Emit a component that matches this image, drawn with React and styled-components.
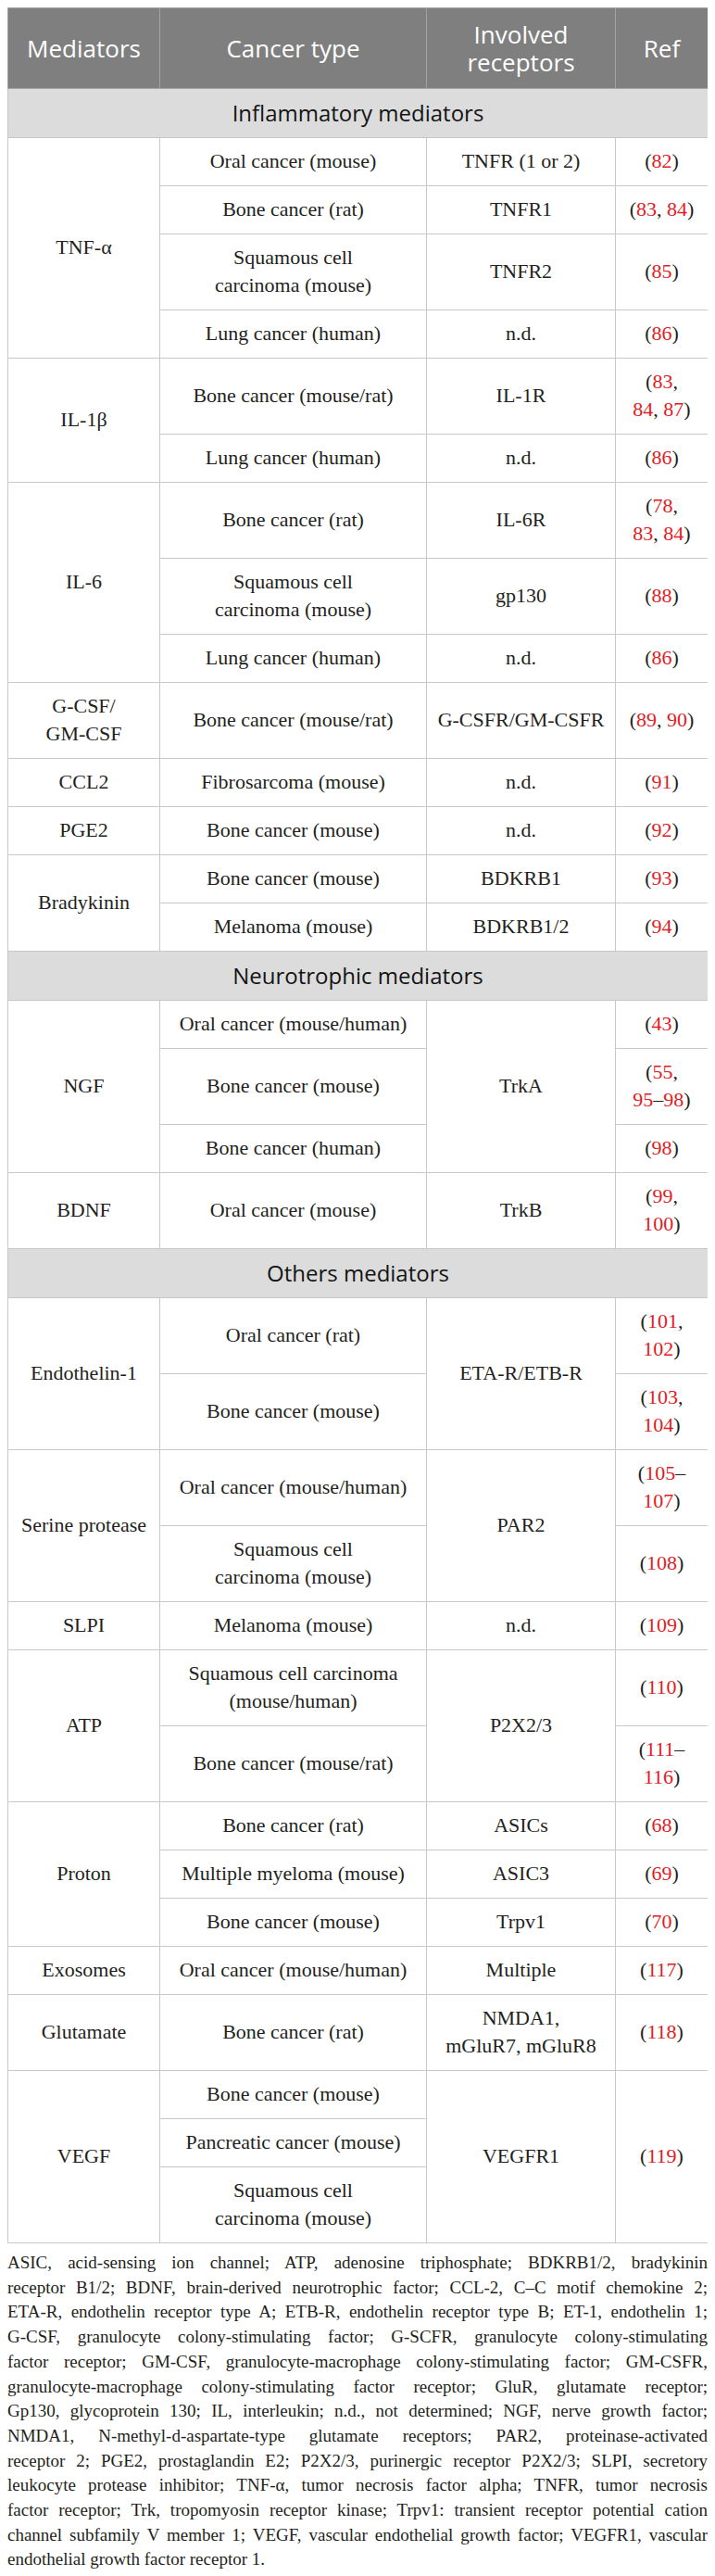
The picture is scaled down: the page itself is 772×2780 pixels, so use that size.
import React from "react";
import styled, { createGlobalStyle } from "styled-components";

const GlobalStyle = createGlobalStyle`
  body {
    margin: 8px;
    background: #ffffff;
  }
`;

const Page = styled.div`
  width: 756px;
`;

const Table = styled.table`
  width: 756px;
  table-layout: fixed;
  border-collapse: collapse;
  font-family: "Liberation Serif", "Times New Roman", serif;
  font-size: 22px;
  color: #231f20;
`;

const HeadCell = styled.th`
  background: #7f7f7f;
  color: #ffffff;
  font-family: "Open Sans", "Noto Sans", sans-serif;
  font-weight: 400;
  font-size: 26px;
  line-height: 30px;
  padding: 13px 4px;
  border: 1px solid #a3a3a3;
  text-align: center;
  vertical-align: middle;
`;

const SectionCell = styled.td`
  background: #dcdcdc;
  color: #141414;
  font-family: "Open Sans", "Noto Sans", sans-serif;
  font-size: 24px;
  line-height: 30px;
  padding: 11px 4px;
  border: 1px solid #c6c6c6;
  text-align: center;
`;

const Cell = styled.td`
  border: 1px solid #c8c8c8;
  padding: 10px 4px 11px;
  line-height: 30px;
  text-align: center;
  vertical-align: middle;
  white-space: nowrap;
`;

const RefNum = styled.span`
  color: #e31b23;
`;

const Notes = styled.div`
  margin-top: 8px;
  font-family: "Liberation Serif", "Times New Roman", serif;
  font-size: 19px;
  line-height: 26.7px;
  color: #231f20;
`;

const NoteLine = styled.div`
  text-align: justify;
  text-align-last: ${(p) => (p.$last ? "left" : "justify")};
`;

const sections = [
  {
    title: "Inflammatory mediators",
    groups: [
      {
        name: "TNF-α",
        rows: [
          { cancer: "Oral cancer (mouse)", receptor: "TNFR (1 or 2)", ref: "(82)" },
          { cancer: "Bone cancer (rat)", receptor: "TNFR1", ref: "(83, 84)" },
          { cancer: "Squamous cell\ncarcinoma (mouse)", receptor: "TNFR2", ref: "(85)" },
          { cancer: "Lung cancer (human)", receptor: "n.d.", ref: "(86)" },
        ],
      },
      {
        name: "IL-1β",
        rows: [
          { cancer: "Bone cancer (mouse/rat)", receptor: "IL-1R", ref: "(83,\n84, 87)" },
          { cancer: "Lung cancer (human)", receptor: "n.d.", ref: "(86)" },
        ],
      },
      {
        name: "IL-6",
        rows: [
          { cancer: "Bone cancer (rat)", receptor: "IL-6R", ref: "(78,\n83, 84)" },
          { cancer: "Squamous cell\ncarcinoma (mouse)", receptor: "gp130", ref: "(88)" },
          { cancer: "Lung cancer (human)", receptor: "n.d.", ref: "(86)" },
        ],
      },
      {
        name: "G-CSF/\nGM-CSF",
        rows: [
          { cancer: "Bone cancer (mouse/rat)", receptor: "G-CSFR/GM-CSFR", ref: "(89, 90)" },
        ],
      },
      {
        name: "CCL2",
        rows: [{ cancer: "Fibrosarcoma (mouse)", receptor: "n.d.", ref: "(91)" }],
      },
      {
        name: "PGE2",
        rows: [{ cancer: "Bone cancer (mouse)", receptor: "n.d.", ref: "(92)" }],
      },
      {
        name: "Bradykinin",
        rows: [
          { cancer: "Bone cancer (mouse)", receptor: "BDKRB1", ref: "(93)" },
          { cancer: "Melanoma (mouse)", receptor: "BDKRB1/2", ref: "(94)" },
        ],
      },
    ],
  },
  {
    title: "Neurotrophic mediators",
    groups: [
      {
        name: "NGF",
        rows: [
          { cancer: "Oral cancer (mouse/human)", receptor: "TrkA", receptorSpan: 3, ref: "(43)" },
          { cancer: "Bone cancer (mouse)", ref: "(55,\n95–98)" },
          { cancer: "Bone cancer (human)", ref: "(98)" },
        ],
      },
      {
        name: "BDNF",
        rows: [{ cancer: "Oral cancer (mouse)", receptor: "TrkB", ref: "(99,\n100)" }],
      },
    ],
  },
  {
    title: "Others mediators",
    groups: [
      {
        name: "Endothelin-1",
        rows: [
          { cancer: "Oral cancer (rat)", receptor: "ETA-R/ETB-R", receptorSpan: 2, ref: "(101,\n102)" },
          { cancer: "Bone cancer (mouse)", ref: "(103,\n104)" },
        ],
      },
      {
        name: "Serine protease",
        rows: [
          { cancer: "Oral cancer (mouse/human)", receptor: "PAR2", receptorSpan: 2, ref: "(105–\n107)" },
          { cancer: "Squamous cell\ncarcinoma (mouse)", ref: "(108)" },
        ],
      },
      {
        name: "SLPI",
        rows: [{ cancer: "Melanoma (mouse)", receptor: "n.d.", ref: "(109)" }],
      },
      {
        name: "ATP",
        rows: [
          { cancer: "Squamous cell carcinoma\n(mouse/human)", receptor: "P2X2/3", receptorSpan: 2, ref: "(110)" },
          { cancer: "Bone cancer (mouse/rat)", ref: "(111–\n116)" },
        ],
      },
      {
        name: "Proton",
        rows: [
          { cancer: "Bone cancer (rat)", receptor: "ASICs", ref: "(68)" },
          { cancer: "Multiple myeloma (mouse)", receptor: "ASIC3", ref: "(69)" },
          { cancer: "Bone cancer (mouse)", receptor: "Trpv1", ref: "(70)" },
        ],
      },
      {
        name: "Exosomes",
        rows: [{ cancer: "Oral cancer (mouse/human)", receptor: "Multiple", ref: "(117)" }],
      },
      {
        name: "Glutamate",
        rows: [{ cancer: "Bone cancer (rat)", receptor: "NMDA1,\nmGluR7, mGluR8", ref: "(118)" }],
      },
      {
        name: "VEGF",
        rows: [
          { cancer: "Bone cancer (mouse)", receptor: "VEGFR1", receptorSpan: 3, ref: "(119)", refSpan: 3 },
          { cancer: "Pancreatic cancer (mouse)" },
          { cancer: "Squamous cell\ncarcinoma (mouse)" },
        ],
      },
    ],
  },
];

const notes = [
  "ASIC, acid-sensing ion channel; ATP, adenosine triphosphate; BDKRB1/2, bradykinin",
  "receptor B1/2; BDNF, brain-derived neurotrophic factor; CCL-2, C–C motif chemokine 2;",
  "ETA-R, endothelin receptor type A; ETB-R, endothelin receptor type B; ET-1, endothelin 1;",
  "G-CSF, granulocyte colony-stimulating factor; G-SCFR, granulocyte colony-stimulating",
  "factor receptor; GM-CSF, granulocyte-macrophage colony-stimulating factor; GM-CSFR,",
  "granulocyte-macrophage colony-stimulating factor receptor; GluR, glutamate receptor;",
  "Gp130, glycoprotein 130; IL, interleukin; n.d., not determined; NGF, nerve growth factor;",
  "NMDA1, N-methyl-d-aspartate-type glutamate receptors; PAR2, proteinase-activated",
  "receptor 2; PGE2, prostaglandin E2; P2X2/3, purinergic receptor P2X2/3; SLPI, secretory",
  "leukocyte protease inhibitor; TNF-α, tumor necrosis factor alpha; TNFR, tumor necrosis",
  "factor receptor; Trk, tropomyosin receptor kinase; Trpv1: transient receptor potential cation",
  "channel subfamily V member 1; VEGF, vascular endothelial growth factor; VEGFR1, vascular",
  "endothelial growth factor receptor 1.",
];

// splits "a\nb" into lines with <br/>
function Lines({ text }) {
  const parts = text.split("\n");
  return parts.map((line, i) => (
    <React.Fragment key={i}>
      {line}
      {i < parts.length - 1 && <br />}
    </React.Fragment>
  ));
}

// reference numbers in red, brackets and commas stay black
function Ref({ text }) {
  const lines = text.split("\n");
  return lines.map((line, i) => (
    <React.Fragment key={i}>
      {line.split(/(\d+)/).map((bit, j) =>
        j % 2 === 1 ? <RefNum key={j}>{bit}</RefNum> : bit
      )}
      {i < lines.length - 1 && <br />}
    </React.Fragment>
  ));
}

function Group({ group }) {
  return group.rows.map((row, i) => (
    <tr key={i}>
      {i === 0 && (
        <Cell rowSpan={group.rows.length}>
          <Lines text={group.name} />
        </Cell>
      )}
      <Cell>
        <Lines text={row.cancer} />
      </Cell>
      {row.receptor !== undefined && (
        <Cell rowSpan={row.receptorSpan || 1}>
          <Lines text={row.receptor} />
        </Cell>
      )}
      {row.ref !== undefined && (
        <Cell rowSpan={row.refSpan || 1}>
          <Ref text={row.ref} />
        </Cell>
      )}
    </tr>
  ));
}

export default function App() {
  return (
    <Page>
      <GlobalStyle />
      <Table>
        <colgroup>
          <col style={{ width: 164 }} />
          <col style={{ width: 288 }} />
          <col style={{ width: 204 }} />
          <col style={{ width: 100 }} />
        </colgroup>
        <thead>
          <tr>
            <HeadCell>Mediators</HeadCell>
            <HeadCell>Cancer type</HeadCell>
            <HeadCell>Involved receptors</HeadCell>
            <HeadCell>Ref</HeadCell>
          </tr>
        </thead>
        {sections.map((section) => (
          <tbody key={section.title}>
            <tr>
              <SectionCell colSpan={4}>{section.title}</SectionCell>
            </tr>
            {section.groups.map((group) => (
              <Group key={group.name} group={group} />
            ))}
          </tbody>
        ))}
      </Table>
      <Notes>
        {notes.map((line, i) => (
          <NoteLine key={i} $last={i === notes.length - 1}>
            {line}
          </NoteLine>
        ))}
      </Notes>
    </Page>
  );
}
